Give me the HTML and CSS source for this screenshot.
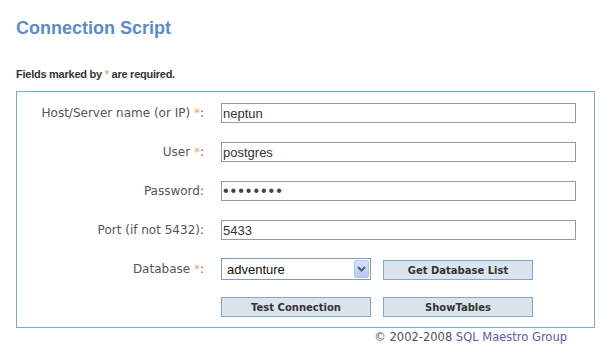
FILE: index.html
```html
<!doctype html>
<html lang="en">
<head>
  <meta charset="utf-8" />
  <title>Connection Script</title>
  <link rel="stylesheet" href="styles.css">
</head>
<body>
  <h1>Connection Script</h1>
  <p class="hint">Fields marked by <span class="req">*</span> are required.</p>

  <form class="box">
    <label class="lbl" for="host">Host/Server name (or IP) <span class="req">*</span>:</label>
    <input id="host" type="text" value="neptun" />

    <label class="lbl" for="user">User <span class="req">*</span>:</label>
    <input id="user" type="text" value="postgres" />

    <label class="lbl" for="pass">Password:</label>
    <input id="pass" type="password" value="secret12" />

    <label class="lbl" for="port">Port (if not 5432):</label>
    <input id="port" type="text" value="5433" />

    <label class="lbl row-db" for="db">Database <span class="req">*</span>:</label>
    <div class="inline row-db">
      <div class="sel">
        <select id="db"><option>adventure</option></select>
        <span class="arrow"><svg width="9" height="6" viewBox="0 0 9 6"><path d="M1 1 L4.5 4.5 L8 1" fill="none" stroke="#4d6185" stroke-width="2"/></svg></span>
      </div>
      <button type="button" class="btn">Get Database List</button>
    </div>

    <span class="row-act"></span>
    <div class="inline row-act">
      <button type="button" class="btn">Test Connection</button>
      <button type="button" class="btn">ShowTables</button>
    </div>
  </form>

  <p class="copy">© 2002-2008 <a href="#">SQL Maestro Group</a></p>
</body>
</html>
```

FILE: styles.css
```css
body { margin:0; padding:17px 14px 0 16px; background:#fff; font-family:"DejaVu Sans", Verdana, sans-serif; font-size:12px; color:#555; }
h1 { margin:0; font-family:"Liberation Sans", Arial, sans-serif; font-size:18px; line-height:22px; font-weight:bold; color:#5b8cc9; }
.hint { margin:29px 0 0; font-family:"Liberation Sans", Arial, sans-serif; font-size:11px; letter-spacing:-0.25px; font-weight:bold; color:#333; line-height:13px; }
.req { color:#f7a27a; }

.box { margin-top:10px; border:1px solid #74a9d8; padding:11px 9px 10px 0; display:grid; grid-template-columns:187px 355px; column-gap:17px; row-gap:19px; align-items:center; width:568px; }
.lbl { text-align:right; line-height:20px; }
input[type=text], input[type=password] { box-sizing:border-box; width:355px; height:20px; margin:0; padding:0 1px; border:1px solid #9a9a9a; font-family:"Liberation Sans", Arial, sans-serif; font-size:13px; color:#333; outline:0; }
input[type=password] { font-size:16px; letter-spacing:2px; color:#444; }

.row-db { margin-top:-1px; }
.row-act { margin-top:-2px; }
.inline { display:flex; align-items:flex-end; gap:12px; }

.sel { position:relative; width:150px; height:22px; }
.sel select { appearance:none; -webkit-appearance:none; box-sizing:border-box; width:150px; height:22px; margin:0; padding:0 0 0 5px; border:1px solid #7f9db9; border-radius:0; background:#fff; font-family:"Liberation Sans", Arial, sans-serif; font-size:13px; color:#111; }
.arrow { position:absolute; right:2px; top:2px; width:15px; height:18px; box-sizing:border-box; border:1px solid #b4c5ee; border-radius:2px; background:linear-gradient(#d9e3fc, #b8c8f2); display:flex; align-items:center; justify-content:center; pointer-events:none; }

.btn { box-sizing:border-box; width:150px; height:20px; margin:0; padding:0; border:1px solid #7aa9d3; background:#dbe3ec; font-family:"DejaVu Sans", Verdana, sans-serif; font-size:10px; font-weight:bold; color:#333; cursor:pointer; }

.copy { margin:2px 0 0; width:551px; text-align:right; color:#555; font-size:11.5px; line-height:14px; }
.copy a { color:#5c5ca8; text-decoration:none; }
```
